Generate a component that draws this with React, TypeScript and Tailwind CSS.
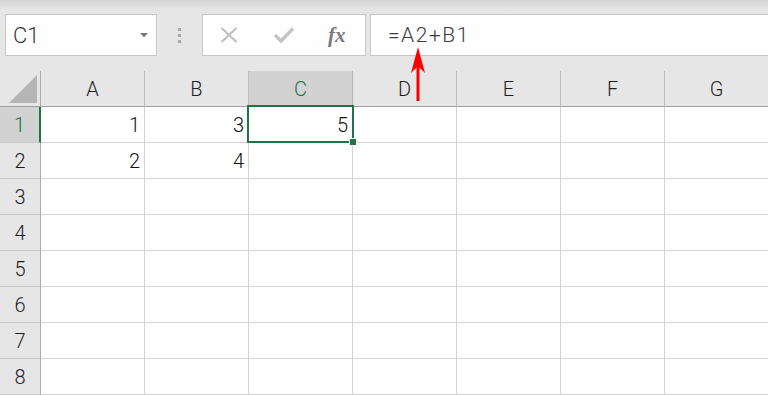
import React from "react";

const cols = ["A", "B", "C", "D", "E", "F", "G"];
const rows = [1, 2, 3, 4, 5, 6, 7, 8];

const data: Record<string, string> = {
  A1: "1",
  B1: "3",
  C1: "5",
  A2: "2",
  B2: "4",
};

function Toolbar() {
  return (
    <div className="h-[71px] bg-[linear-gradient(to_bottom,#d3d3d3,#e6e6e6_9px)] flex items-start pt-[14px] pl-[5px]">
      {/* name box */}
      <div className="w-[152px] h-[42px] bg-[#fefefe] border border-[#c6c6c6] flex items-center justify-between pl-[7px] pr-[8px]">
        <span className="text-[22px] text-[#3a3a3a] font-light leading-none mt-[2px]">C1</span>
        <svg width="8" height="5" viewBox="0 0 8 5">
          <path d="M0 0 L8 0 L4 4.5 Z" fill="#777" />
        </svg>
      </div>
      {/* dots */}
      <div className="w-[45px] h-[42px] flex flex-col items-center justify-center gap-[3px]">
        <div className="w-[3px] h-[3px] bg-[#a8a8a8]" />
        <div className="w-[3px] h-[3px] bg-[#a8a8a8]" />
        <div className="w-[3px] h-[3px] bg-[#a8a8a8]" />
      </div>
      {/* cancel / enter / fx */}
      <div className="w-[164px] h-[42px] bg-[#fefefe] border border-[#c6c6c6] flex items-center pl-[17px]">
        <svg width="18" height="16" viewBox="0 0 18 16">
          <path d="M1.5 1 L16.5 15 M16.5 1 L1.5 15" stroke="#bdbdbd" strokeWidth="2" fill="none" />
        </svg>
        <svg className="ml-[36px]" width="20" height="16" viewBox="0 0 20 16">
          <path d="M1 8 L7 14 L19 1.5" stroke="#c4c4c4" strokeWidth="3.5" fill="none" />
        </svg>
        <span className="ml-[34px] text-[21px] leading-none italic font-bold text-[#7a7a7a] font-['Liberation_Serif',serif]">
          fx
        </span>
      </div>
      {/* formula */}
      <div className="ml-[4px] flex-1 h-[42px] bg-[#fefefe] border border-r-0 border-[#c6c6c6] flex items-center pl-[17px]">
        <span className="text-[21px] font-light tracking-[1.5px] text-[#3c3c3c] leading-none">=A2+B1</span>
      </div>
    </div>
  );
}

function HeaderRow() {
  return (
    <div className="flex h-[36px] bg-[#e6e6e6]">
      <div className="w-[41px] shrink-0 border-r border-b border-r-[#ababab] border-b-[#9e9e9e] relative">
        <svg className="absolute left-[9px] top-[4px]" width="29" height="29" viewBox="0 0 29 29">
          <path d="M28 0 L28 28 L0 28 Z" fill="#b5b5b5" />
        </svg>
      </div>
      {cols.map((c) => {
        const sel = c === "C";
        return (
          <div
            key={c}
            className={
              sel
                ? "w-[104px] shrink-0 border-r border-b border-r-[#b5b5b5] border-b-[#217346] bg-[#d2d2d2] flex items-center justify-center text-[20px] font-light text-[#217346]"
                : "w-[104px] shrink-0 border-r border-b border-r-[#bdbdbd] border-b-[#9e9e9e] flex items-center justify-center text-[20px] font-light text-[#1e1e1e]"
            }
          >
            {c}
          </div>
        );
      })}
    </div>
  );
}

function GridRow({ r }: { r: number }) {
  const sel = r === 1;
  return (
    <div className="flex h-[36px]">
      <div
        className={
          sel
            ? "w-[41px] shrink-0 border-r-2 border-b border-r-[#217346] border-b-[#c8c8c8] bg-[#d2d2d2] flex items-center justify-center text-[20px] font-light text-[#217346]"
            : "w-[41px] shrink-0 border-r border-b border-r-[#ababab] border-b-[#c8c8c8] bg-[#e6e6e6] flex items-center justify-center text-[20px] font-light text-[#1e1e1e]"
        }
      >
        {r}
      </div>
      {cols.map((c) => {
        const key = c + r;
        return (
          <div
            key={key}
            className="w-[104px] shrink-0 border-r border-b border-[#d4d4d4] bg-white flex items-center justify-end pr-[4px] text-[20px] font-light text-[#111] relative"
          >
            {data[key]}
            {key === "C1" && (
              <div className="absolute left-[-2px] top-[-2px] w-[107px] h-[38px] border-2 border-[#217346] z-10">
                <div className="absolute right-[-5px] bottom-[-5px] w-[8px] h-[8px] bg-[#217346] border border-white" />
              </div>
            )}
          </div>
        );
      })}
    </div>
  );
}

export default function App() {
  return (
    <div className="w-[768px] h-[395px] overflow-hidden bg-white relative font-['Roboto','Noto_Sans_CJK_JP',sans-serif]">
      <Toolbar />
      <HeaderRow />
      {rows.map((r) => (
        <GridRow key={r} r={r} />
      ))}
      {/* red arrow */}
      <svg className="absolute left-[410px] top-[47px] z-20" width="16" height="55" viewBox="0 0 16 55">
        <path d="M8 0 L15 26 L8 19 L1 26 Z" fill="#ff0000" />
        <path d="M8 18 L8 54" stroke="#ff0000" strokeWidth="3" />
      </svg>
    </div>
  );
}
